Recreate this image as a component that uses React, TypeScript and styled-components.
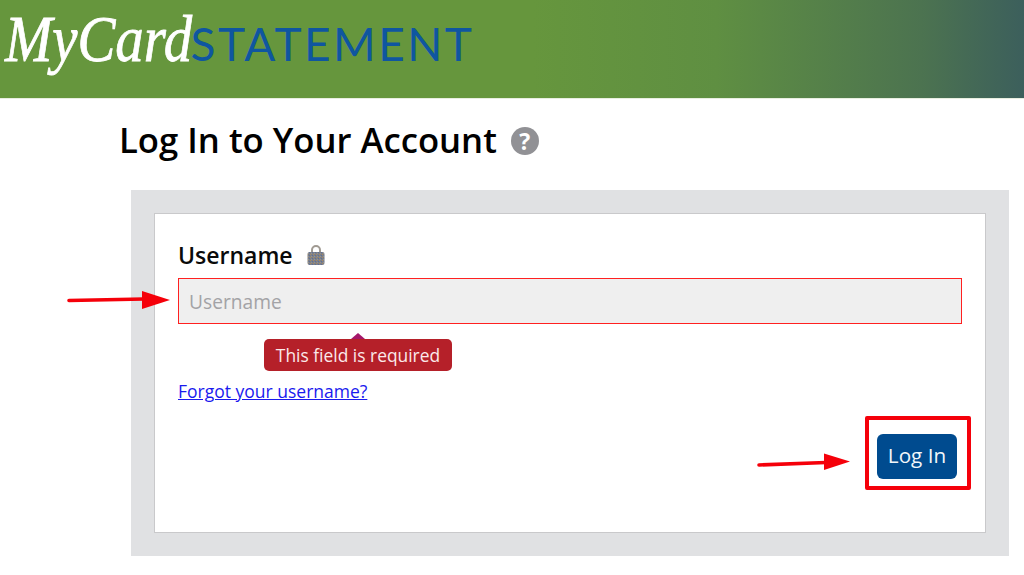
import * as React from "react";
import styled, { createGlobalStyle } from "styled-components";

const GlobalStyle = createGlobalStyle`
    html, body {
        margin: 0;
        padding: 0;
        background: #fff;
        overflow: hidden;
    }
    body {
        font-family: "Open Sans", "Noto Sans", sans-serif;
    }
`;

const Page = styled.div`
    position: relative;
    width: 1024px;
    height: 575px;
    overflow: hidden;
`;

const Header = styled.header`
    height: 98px;
    display: flex;
    align-items: flex-start;
    background: linear-gradient(90deg, #66963d 0%, #66963d 52%, #5f8f42 70%, #4c7350 90%, #3c5f5c 100%);
    border-bottom: 1px solid #e8eee0;
`;

const Logo = styled.div`
    display: flex;
    align-items: baseline;
    padding: 1px 0 0 5px;
    height: 80px;
`;

const LogoScript = styled.span`
    display: inline-block;
    padding-right: 6px;
    margin-right: -38px;
    font-family: "Liberation Serif", serif;
    font-style: italic;
    font-size: 66px;
    line-height: 76px;
    white-space: nowrap;
    color: #fff;
    -webkit-text-stroke: 0.8px #fff;
    transform: scaleX(0.86);
    transform-origin: left bottom;
`;

const LogoWord = styled.span`
    font-family: "Lato", "Liberation Sans", sans-serif;
    font-weight: 400;
    font-size: 46px;
    line-height: 76px;
    letter-spacing: 2.4px;
    color: #0f56a0;
`;

const TitleRow = styled.div`
    display: flex;
    align-items: center;
    gap: 14px;
    padding: 18px 0 0 119px;
    height: 45px;
`;

const Title = styled.h1`
    margin: 0;
    font-size: 34.7px;
    line-height: 45px;
    font-weight: 600;
    color: #000;
`;

const HelpBadge = styled.span`
    width: 28px;
    height: 28px;
    margin-top: 3px;
    border-radius: 50%;
    background: #919195;
    color: #fff;
    font-size: 23px;
    font-weight: 700;
    line-height: 28px;
    text-align: center;
`;

const Panel = styled.section`
    box-sizing: border-box;
    width: 878px;
    height: 366px;
    margin: 28px 0 0 131px;
    padding: 23px;
    background: #e0e1e3;
`;

const Card = styled.div`
    box-sizing: border-box;
    height: 320px;
    padding: 26px 23px 0;
    background: #fff;
    border: 1px solid #c9c9cb;
    display: flex;
    flex-direction: column;
`;

const LabelRow = styled.div`
    display: flex;
    align-items: center;
    gap: 14px;
    height: 30px;
`;

const Label = styled.label`
    font-size: 23px;
    line-height: 30px;
    font-weight: 600;
    color: #0a0a0a;
`;

const UsernameInput = styled.input`
    box-sizing: border-box;
    display: block;
    width: 784px;
    height: 46px;
    margin-top: 8px;
    padding: 1px 10px 0;
    background: #efefef;
    border: 1px solid #ff2020;
    border-radius: 0;
    outline: none;
    font-family: inherit;
    font-size: 19.2px;

    &::placeholder {
        color: #a3a3a6;
        opacity: 1;
    }
`;

const ErrorRow = styled.div`
    display: flex;
    margin: 15px 0 0 86px;
`;

const ErrorTip = styled.div`
    position: relative;
    box-sizing: border-box;
    height: 32px;
    width: 188px;
    background: #b52029;
    border-radius: 5px;
    color: #fbe9ea;
    font-size: 17.4px;
    line-height: 32px;
    text-align: center;

    &::before {
        content: "";
        position: absolute;
        top: -6px;
        left: 87px;
        border-left: 7px solid transparent;
        border-right: 7px solid transparent;
        border-bottom: 6px solid #a5176a;
    }
`;

const ForgotLink = styled.a`
    align-self: flex-start;
    margin-top: 9px;
    font-size: 17.5px;
    line-height: 22px;
    color: #1a1aee;
    text-decoration: underline;
`;

const Actions = styled.div`
    display: flex;
    justify-content: flex-end;
    margin: 32px 5px 0 0;
`;

const LoginButton = styled.button`
    width: 80px;
    height: 45px;
    padding: 0 0 3px;
    background: #004b8f;
    border: none;
    border-radius: 6px;
    color: #f2f6fa;
    font-family: inherit;
    font-size: 20.7px;
    cursor: pointer;
`;

const ButtonHighlight = styled.div`
    position: absolute;
    box-sizing: border-box;
    left: 865px;
    top: 416px;
    width: 106px;
    height: 74px;
    border: 4px solid #f5000a;
    border-radius: 2px;
    pointer-events: none;
`;

const ArrowMark = styled.svg<{ $x: number; $y: number }>`
    position: absolute;
    pointer-events: none;
    left: ${(p) => p.$x}px;
    top: ${(p) => p.$y}px;
`;

// the lock in the picture is a dithered emoji, so the body gets a small speckle pattern
const LockIcon = () => (
    <svg width="18" height="20" viewBox="0 0 18 20">
        <defs>
            <pattern id="lockSpeckle" width="3" height="3" patternUnits="userSpaceOnUse">
                <rect width="3" height="3" fill="#7c7f88" />
                <rect width="1" height="1" fill="#a8885c" />
                <rect x="2" y="1" width="1" height="1" fill="#5c6f96" />
                <rect x="1" y="2" width="1" height="1" fill="#96928c" />
            </pattern>
        </defs>
        <path d="M5 8V5a4 4 0 0 1 8 0V8" fill="none" stroke="#a09a92" strokeWidth="2" />
        <rect x="0.5" y="7" width="17" height="13" rx="2" fill="url(#lockSpeckle)" />
    </svg>
);

const App = () => {
    return (
        <Page>
            <GlobalStyle />
            <Header>
                <Logo>
                    <LogoScript>MyCard</LogoScript>
                    <LogoWord>STATEMENT</LogoWord>
                </Logo>
            </Header>
            <TitleRow>
                <Title>Log In to Your Account</Title>
                <HelpBadge>?</HelpBadge>
            </TitleRow>
            <Panel>
                <Card>
                    <LabelRow>
                        <Label>Username</Label>
                        <LockIcon />
                    </LabelRow>
                    <UsernameInput placeholder="Username" readOnly />
                    <ErrorRow>
                        <ErrorTip>This field is required</ErrorTip>
                    </ErrorRow>
                    <ForgotLink href="#">Forgot your username?</ForgotLink>
                    <Actions>
                        <LoginButton>Log In</LoginButton>
                    </Actions>
                </Card>
            </Panel>
            <ArrowMark $x={66} $y={289} width="106" height="24" viewBox="0 0 106 24">
                <path d="M3 11.5 L78 10" stroke="#f5000a" strokeWidth="3.6" strokeLinecap="round" />
                <path d="M76 2 L104 11 L76 20 Z" fill="#f5000a" />
            </ArrowMark>
            <ArrowMark $x={756} $y={450} width="96" height="24" viewBox="0 0 96 24">
                <path d="M3 15 L70 12.5" stroke="#f5000a" strokeWidth="3.6" strokeLinecap="round" />
                <path d="M68 3.5 L94 11.5 L68 20 Z" fill="#f5000a" />
            </ArrowMark>
            <ButtonHighlight />
        </Page>
    );
};

export default App;
